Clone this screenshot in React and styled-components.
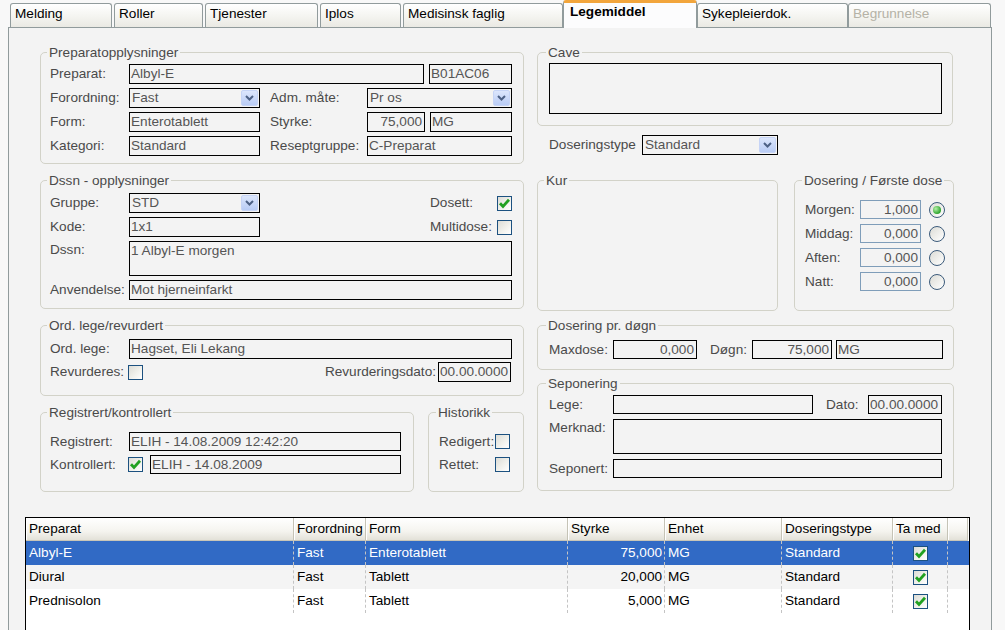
import React from "react";
import styled, { createGlobalStyle } from "styled-components";

const GlobalStyle = createGlobalStyle`
  html, body {
    margin: 0;
    padding: 0;
    height: 630px;
    overflow: hidden;
    background: #f8f8f8;
  }
  body {
    font-family: "Liberation Sans", Arial, sans-serif;
    font-size: 13.6px;
    color: #000;
  }
`;

const Page = styled.div`
  height: 630px;
  display: flex;
  flex-direction: column;
`;

const TabBar = styled.div`
  display: flex;
  align-items: flex-end;
  height: 28px;
  padding-left: 10px;
  margin-bottom: -1px;
  position: relative;
  z-index: 1;
`;

const Tab = styled.div`
  box-sizing: border-box;
  flex: none;
  width: ${(p) => p.$w}px;
  height: ${(p) => (p.$active ? 28 : 24)}px;
  margin: 0 ${(p) => p.$gap || 0}px ${(p) => (p.$active ? 0 : 1)}px 0;
  padding: ${(p) => (p.$active ? "0 0 0 6px" : "1px 0 0 4px")};
  border: 1px solid #919b9c;
  border-bottom: none;
  border-top: ${(p) => (p.$active ? "3px solid #f2a53c" : "1px solid #919b9c")};
  border-radius: 3px 3px 0 0;
  background: ${(p) =>
    p.$active ? "#fcfcfd" : "linear-gradient(#ffffff, #f4f4f0 55%, #eae9e3)"};
  color: ${(p) => (p.$disabled ? "#b5b2a6" : "#000")};
  font-weight: ${(p) => (p.$active ? 700 : 400)};
  line-height: 18px;
  white-space: nowrap;
`;

const Panel = styled.div`
  flex: 1;
  box-sizing: border-box;
  width: 984px;
  margin-left: 8px;
  border: 1px solid #919b9c;
  border-bottom: none;
  background: #f3f3f3;
  padding: 24px 0 0 16px;
`;

const Columns = styled.div`
  display: flex;
  align-items: flex-start;
  gap: 13px;
  margin-left: 15px;
`;

const Column = styled.div`
  display: flex;
  flex-direction: column;
  gap: ${(p) => p.$gap || 0}px;
  width: ${(p) => p.$w}px;
`;

const Pair = styled.div`
  display: flex;
  align-items: flex-start;
  gap: ${(p) => p.$gap}px;
  margin-top: ${(p) => p.$mt || 0}px;
`;

const Group = styled.div`
  box-sizing: border-box;
  flex: none;
  width: ${(p) => p.$w}px;
  height: ${(p) => p.$h}px;
  margin-top: ${(p) => p.$mt || 0}px;
  padding: 0 0 0 ${(p) => p.$pl || 9}px;
  border: 1px solid #d2d2c8;
  border-radius: 5px;
`;

const Legend = styled.div`
  width: fit-content;
  height: 15px;
  line-height: 15px;
  margin: -8px 0 0 -3px;
  padding: 0 2px;
  background: #f3f3f3;
  color: #4a4a4a;
  white-space: nowrap;
`;

const Rows = styled.div`
  display: flex;
  flex-direction: column;
  gap: ${(p) => p.$gap ?? 4}px;
  margin-top: ${(p) => p.$mt || 0}px;
`;

const Row = styled.div`
  display: flex;
  align-items: ${(p) => (p.$top ? "flex-start" : "center")};
  height: ${(p) => p.$h || 20}px;
  margin-top: ${(p) => p.$mt || 0}px;
  padding-left: ${(p) => p.$pl || 0}px;
`;

const Label = styled.span`
  flex: none;
  width: ${(p) => (p.$w ? `${p.$w}px` : "auto")};
  margin-left: ${(p) => p.$ml || 0}px;
  margin-right: ${(p) => p.$mr || 0}px;
  line-height: 18px;
  color: #4a4a4a;
  white-space: nowrap;
`;

const Spacer = styled.span`
  flex: 1;
`;

const Field = styled.div`
  box-sizing: border-box;
  flex: none;
  width: ${(p) => p.$w}px;
  height: ${(p) => p.$h || 20}px;
  margin-top: ${(p) => p.$mt || 0}px;
  margin-left: ${(p) => p.$ml || 0}px;
  padding: 0 2px 0 1px;
  border: 1px solid ${(p) => (p.$soft ? "#7f9db9" : "#000")};
  background: #f3f3f3;
  color: #555;
  line-height: ${(p) => (p.$multi ? 17 : (p.$h || 20) - 2)}px;
  text-align: ${(p) => (p.$right ? "right" : "left")};
  white-space: nowrap;
  overflow: hidden;
`;

const SelectBox = styled(Field)`
  display: flex;
  align-items: center;
  padding: 0 1px 0 2px;
`;

const DropBtn = styled.span`
  box-sizing: border-box;
  margin-left: auto;
  width: 17px;
  height: 16px;
  border: 1px solid #c6d4f6;
  border-radius: 2px;
  background: linear-gradient(#dce6fc, #b9ccf5);
  display: flex;
  align-items: center;
  justify-content: center;
`;

const CheckBox = styled.span`
  box-sizing: border-box;
  flex: none;
  width: 15px;
  height: 15px;
  margin-left: ${(p) => p.$ml || 0}px;
  margin-right: ${(p) => p.$mr || 0}px;
  border: 1px solid #1c5180;
  background: linear-gradient(135deg, #dcdcd6 0%, #f1f1ec 55%, #ffffff 100%);
  display: flex;
  align-items: center;
  justify-content: center;
`;

const RadioDot = styled.span`
  box-sizing: border-box;
  flex: none;
  width: 16px;
  height: 16px;
  margin-left: 8px;
  border-radius: 50%;
  border: 1px solid #3b5a7a;
  background: linear-gradient(135deg, #dcdcd6, #ffffff);
  display: flex;
  align-items: center;
  justify-content: center;

  &::after {
    content: "";
    display: ${(p) => (p.$on ? "block" : "none")};
    width: 8px;
    height: 8px;
    border-radius: 50%;
    background: radial-gradient(circle at 35% 35%, #b6f0a8, #2ea52e 70%);
  }
`;

const Table = styled.div`
  box-sizing: border-box;
  width: 945px;
  height: 130px;
  margin-top: 25px;
  border: 1px solid #000;
  background: #fff;
`;

const GridRow = styled.div`
  display: grid;
  grid-template-columns: 268px 72px 202px 97px 117px 111px 55px 20px;
  background: ${(p) => (p.$selected ? "#316ac5" : p.$alt ? "#f4f4f4" : "#fff")};
  color: ${(p) => (p.$selected ? "#fff" : "#000")};
`;

const HeadCell = styled.div`
  box-sizing: border-box;
  height: 23px;
  line-height: 22px;
  padding: 0 3px;
  background: linear-gradient(#ffffff, #f5f4ef 60%, #e3e1d8);
  border-right: 1px solid #c5c3b6;
  border-bottom: 1px solid #c9c6b8;
  box-shadow: inset 1px 0 0 #ffffff;
  white-space: nowrap;
  overflow: hidden;
`;

const Cell = styled.div`
  box-sizing: border-box;
  height: 24px;
  line-height: 24px;
  padding: 0 2px 0 3px;
  border-right: ${(p) => (p.$last ? "none" : "1px dashed #c4c4c4")};
  text-align: ${(p) => (p.$right ? "right" : "left")};
  display: ${(p) => (p.$center ? "flex" : "block")};
  align-items: center;
  justify-content: center;
  white-space: nowrap;
  overflow: hidden;
`;

const Chevron = () => (
  <svg width="9" height="6" viewBox="0 0 9 6">
    <path d="M1 1 L4.5 4.5 L8 1" fill="none" stroke="#4d6185" strokeWidth="2" />
  </svg>
);

const Tick = () => (
  <svg width="13" height="13" viewBox="0 0 13 13">
    <path d="M2 6.2 L5 9.4 L11 2.8" fill="none" stroke="#21a121" strokeWidth="2.8" />
  </svg>
);

const Select = ({ w, children }) => (
  <SelectBox $w={w}>
    <span>{children}</span>
    <DropBtn>
      <Chevron />
    </DropBtn>
  </SelectBox>
);

const Check = ({ checked, ml, mr }) => (
  <CheckBox $ml={ml} $mr={mr}>{checked && <Tick />}</CheckBox>
);

const tabs = [
  { label: "Melding", w: 102, gap: 2 },
  { label: "Roller", w: 89, gap: 2 },
  { label: "Tjenester", w: 113, gap: 2 },
  { label: "Iplos", w: 81, gap: 2 },
  { label: "Medisinsk faglig", w: 160 },
  { label: "Legemiddel", w: 134, active: true },
  { label: "Sykepleierdok.", w: 151 },
  { label: "Begrunnelse", w: 143, disabled: true },
];

const doses = [
  ["Morgen:", "1,000", true],
  ["Middag:", "0,000", false],
  ["Aften:", "0,000", false],
  ["Natt:", "0,000", false],
];

const columns = ["Preparat", "Forordning", "Form", "Styrke", "Enhet", "Doseringstype", "Ta med", ""];

const medicines = [
  ["Albyl-E", "Fast", "Enterotablett", "75,000", "MG", "Standard"],
  ["Diural", "Fast", "Tablett", "20,000", "MG", "Standard"],
  ["Prednisolon", "Fast", "Tablett", "5,000", "MG", "Standard"],
];

export default function App() {
  return (
    <Page>
      <GlobalStyle />
      <TabBar>
        {tabs.map((t) => (
          <Tab key={t.label} $w={t.w} $gap={t.gap} $active={t.active} $disabled={t.disabled}>
            {t.label}
          </Tab>
        ))}
      </TabBar>

      <Panel>
        <Columns>
          <Column $w={484} $gap={16}>
            <Group $w={484} $h={112}>
              <Legend>Preparatopplysninger</Legend>
              <Rows $mt={4}>
                <Row>
                  <Label $w={79}>Preparat:</Label>
                  <Field $w={295}>Albyl-E</Field>
                  <Field $w={83} $ml={5}>B01AC06</Field>
                </Row>
                <Row>
                  <Label $w={79}>Forordning:</Label>
                  <Select w={131}>Fast</Select>
                  <Label $w={97} $ml={10}>Adm. måte:</Label>
                  <Select w={145}>Pr os</Select>
                </Row>
                <Row>
                  <Label $w={79}>Form:</Label>
                  <Field $w={131}>Enterotablett</Field>
                  <Label $w={97} $ml={10}>Styrke:</Label>
                  <Field $w={58} $right>75,000</Field>
                  <Field $w={82} $ml={5}>MG</Field>
                </Row>
                <Row>
                  <Label $w={79}>Kategori:</Label>
                  <Field $w={131}>Standard</Field>
                  <Label $w={97} $ml={10}>Reseptgruppe:</Label>
                  <Field $w={145}>C-Preparat</Field>
                </Row>
              </Rows>
            </Group>

            <Group $w={484} $h={129}>
              <Legend>Dssn - opplysninger</Legend>
              <Rows $mt={5}>
                <Row>
                  <Label $w={79}>Gruppe:</Label>
                  <Select w={131}>STD</Select>
                  <Spacer />
                  <Label $w={67}>Dosett:</Label>
                  <Check checked mr={11} />
                </Row>
                <Row>
                  <Label $w={79}>Kode:</Label>
                  <Field $w={131}>1x1</Field>
                  <Spacer />
                  <Label $w={67}>Multidose:</Label>
                  <Check mr={11} />
                </Row>
                <Row $h={35} $top>
                  <Label $w={79}>Dssn:</Label>
                  <Field $w={383} $h={35} $multi>
                    1 Albyl-E morgen
                  </Field>
                </Row>
                <Row>
                  <Label $w={79}>Anvendelse:</Label>
                  <Field $w={383}>Mot hjerneinfarkt</Field>
                </Row>
              </Rows>
            </Group>

            <Group $w={484} $h={71}>
              <Legend>Ord. lege/revurdert</Legend>
              <Rows $mt={6} $gap={3}>
                <Row>
                  <Label $w={79}>Ord. lege:</Label>
                  <Field $w={383}>Hagset, Eli Lekang</Field>
                </Row>
                <Row>
                  <Label $w={78}>Revurderes:</Label>
                  <Check />
                  <Spacer />
                  <Label $mr={2}>Revurderingsdato:</Label>
                  <Field $w={73}>00.00.0000</Field>
                  <Label $w={12} />
                </Row>
              </Rows>
            </Group>

            <Pair $gap={14}>
              <Group $w={374} $h={80}>
                <Legend>Registrert/kontrollert</Legend>
                <Rows $mt={12}>
                  <Row $h={19}>
                    <Label $w={79}>Registrert:</Label>
                    <Field $w={272} $h={19}>ELIH - 14.08.2009 12:42:20</Field>
                  </Row>
                  <Row $h={19}>
                    <Label $w={78}>Kontrollert:</Label>
                    <Check checked mr={7} />
                    <Field $w={251} $h={19}>ELIH - 14.08.2009</Field>
                  </Row>
                </Rows>
              </Group>
              <Group $w={96} $h={80} $pl={10}>
                <Legend>Historikk</Legend>
                <Rows $mt={12}>
                  <Row $h={19}>
                    <Label $w={56}>Redigert:</Label>
                    <Check />
                  </Row>
                  <Row $h={19}>
                    <Label $w={56}>Rettet:</Label>
                    <Check />
                  </Row>
                </Rows>
              </Group>
            </Pair>
          </Column>

          <Column $w={417}>
            <Group $w={416} $h={74} $pl={11}>
              <Legend>Cave</Legend>
              <Field $w={393} $h={51} $mt={3} />
            </Group>

            <Row $mt={9} $pl={12}>
              <Label $w={93}>Doseringstype</Label>
              <Select w={136}>Standard</Select>
            </Row>

            <Pair $gap={16} $mt={25}>
              <Group $w={241} $h={131}>
                <Legend>Kur</Legend>
              </Group>
              <Group $w={160} $h={131} $pl={10}>
                <Legend>Dosering / Første dose</Legend>
                <Rows $mt={12} $gap={5}>
                  {doses.map(([label, value, on]) => (
                    <Row key={label} $h={19}>
                      <Label $w={55}>{label}</Label>
                      <Field $w={61} $h={19} $soft $right>
                        {value}
                      </Field>
                      <RadioDot $on={on} />
                    </Row>
                  ))}
                </Rows>
              </Group>
            </Pair>

            <Group $w={417} $h={45} $pl={11} $mt={14}>
              <Legend>Dosering pr. døgn</Legend>
              <Row $h={19} $mt={7}>
                <Label $w={64}>Maxdose:</Label>
                <Field $w={84} $h={19} $right>0,000</Field>
                <Label $w={42} $ml={13}>Døgn:</Label>
                <Field $w={80} $h={19} $right>75,000</Field>
                <Field $w={107} $h={19} $ml={4}>MG</Field>
              </Row>
            </Group>

            <Group $w={417} $h={108} $pl={11} $mt={13}>
              <Legend>Seponering</Legend>
              <Rows $mt={4} $gap={5}>
                <Row $h={19}>
                  <Label $w={64}>Lege:</Label>
                  <Field $w={200} $h={19} />
                  <Label $w={42} $ml={13}>Dato:</Label>
                  <Field $w={74} $h={19}>00.00.0000</Field>
                </Row>
                <Row $h={35} $top>
                  <Label $w={64}>Merknad:</Label>
                  <Field $w={329} $h={35} $multi />
                </Row>
                <Row $h={19}>
                  <Label $w={64}>Seponert:</Label>
                  <Field $w={329} $h={19} />
                </Row>
              </Rows>
            </Group>
          </Column>
        </Columns>

        <Table>
          <GridRow>
            {columns.map((c, i) => (
              <HeadCell key={i}>{c}</HeadCell>
            ))}
          </GridRow>
          {medicines.map((m, r) => (
            <GridRow key={m[0]} $selected={r === 0} $alt={r === 1}>
              <Cell>{m[0]}</Cell>
              <Cell>{m[1]}</Cell>
              <Cell>{m[2]}</Cell>
              <Cell $right>{m[3]}</Cell>
              <Cell>{m[4]}</Cell>
              <Cell>{m[5]}</Cell>
              <Cell $center>
                <Check checked />
              </Cell>
              <Cell $last />
            </GridRow>
          ))}
        </Table>
      </Panel>
    </Page>
  );
}
